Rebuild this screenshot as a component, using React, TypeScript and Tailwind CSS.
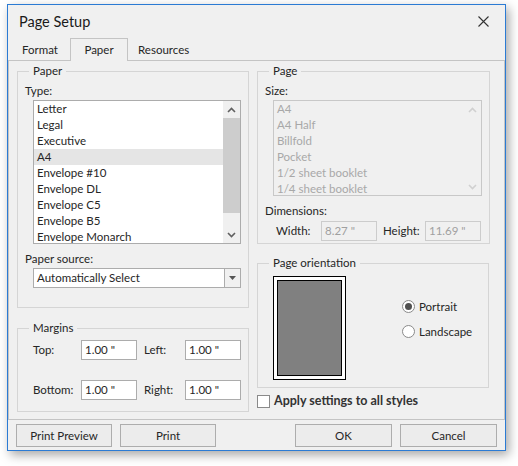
import React from 'react'

const font = { fontFamily: 'Lato, "Noto Sans", sans-serif' }

function GroupBox({ title, className, children }: { title: string; className?: string; children: React.ReactNode }) {
  return (
    <fieldset className={`border border-[#d5d5d5] px-[7px] ${className ?? ''}`}>
      <legend className="ml-[4px] px-[4px] leading-[16px]">{title}</legend>
      {children}
    </fieldset>
  )
}

function Arrow({ dir, disabled }: { dir: 'up' | 'down'; disabled?: boolean }) {
  const c = disabled ? '#d0d0d0' : '#606060'
  return (
    <svg width="9" height="6" viewBox="0 0 9 6">
      {dir === 'up' ? (
        <path d="M1 5 L4.5 1.5 L8 5" fill="none" stroke={c} strokeWidth="1.6" />
      ) : (
        <path d="M1 1 L4.5 4.5 L8 1" fill="none" stroke={c} strokeWidth="1.6" />
      )}
    </svg>
  )
}

function Field({ value, disabled, className }: { value: string; disabled?: boolean; className?: string }) {
  return (
    <div
      className={`h-[20px] w-[56px] shrink-0 border flex items-center px-[3px] ${
        disabled ? 'border-[#cccccc] text-[#a0a0a0] bg-[#f0f0f0]' : 'border-[#acacac] bg-white'
      } ${className ?? ''}`}
    >
      {value}
    </div>
  )
}

const paperTypes = ['Letter', 'Legal', 'Executive', 'A4', 'Envelope #10', 'Envelope DL', 'Envelope C5', 'Envelope B5', 'Envelope Monarch']
const pageSizes = ['A4', 'A4 Half', 'Billfold', 'Pocket', '1/2 sheet booklet', '1/4 sheet booklet']

export default function App() {
  return (
    <div className="w-[518px] h-[466px] bg-white pt-[4px] pl-[7px] text-[11.5px] text-[#262626]" style={font}>
      <div className="w-[499px] h-[447px] border border-[#2b7bd4] bg-[#f0f0f0] flex flex-col shadow-[3px_4px_10px_rgba(0,0,0,0.35)]">
        {/* title bar */}
        <div className="h-[33px] flex items-center justify-between pl-[11px] pr-[16px] shrink-0">
          <span className="text-[14.5px] text-[#1a1a1a]">Page Setup</span>
          <svg width="11" height="11" viewBox="0 0 11 11">
            <path d="M0.5 0.5 L10.5 10.5 M10.5 0.5 L0.5 10.5" stroke="#333" strokeWidth="1.1" />
          </svg>
        </div>

        {/* tabs */}
        <div className="h-[22px] flex items-end shrink-0 relative z-10">
          <div className="h-[20px] w-[62px] pl-[14px] flex items-center">Format</div>
          <div className="h-[23px] w-[58px] -mb-[1px] flex items-center justify-center border border-b-0 border-[#c4c4c4] bg-[#f0f0f0]">
            Paper
          </div>
          <div className="h-[20px] px-[10px] flex items-center">Resources</div>
        </div>

        {/* panel */}
        <div className="h-[360px] border border-[#c4c4c4] flex gap-[8px] pl-[8px] pt-[2px] shrink-0">
          {/* left column */}
          <div className="w-[232px] flex flex-col">
            <GroupBox title="Paper" className="pb-[19px]">
              <div className="mt-[4px] leading-[16px]">Type:</div>
              <div className="ml-[8px] mt-[1px] w-[208px] h-[144px] border border-[#acacac] bg-white flex overflow-hidden">
                <div className="flex-1 flex flex-col">
                  {paperTypes.map((t) => (
                    <div key={t} className={`h-[16px] shrink-0 leading-[16px] px-[3px] ${t === 'A4' ? 'bg-[#e5e5e5]' : ''}`}>
                      {t}
                    </div>
                  ))}
                </div>
                <div className="w-[17px] bg-[#f0f0f0] flex flex-col items-center">
                  <div className="h-[17px] flex items-center justify-center">
                    <Arrow dir="up" />
                  </div>
                  <div className="w-[17px] h-[95px] bg-[#cdcdcd]" />
                  <div className="flex-1" />
                  <div className="h-[17px] flex items-center justify-center">
                    <Arrow dir="down" />
                  </div>
                </div>
              </div>
              <div className="mt-[7px] leading-[16px]">Paper source:</div>
              <div className="ml-[8px] mt-[1px] w-[208px] h-[20px] border border-[#acacac] bg-white flex">
                <div className="flex-1 flex items-center px-[3px]">Automatically Select</div>
                <div className="w-[16px] border-l border-[#acacac] bg-[#f0f0f0] flex items-center justify-center">
                  <svg width="7" height="4" viewBox="0 0 7 4">
                    <path d="M0 0 H7 L3.5 4 Z" fill="#555" />
                  </svg>
                </div>
              </div>
            </GroupBox>

            <GroupBox title="Margins" className="mt-[12px] pb-[11px]">
              <div className="mt-[4px] flex flex-col gap-[20px] pl-[8px]">
                <div className="flex items-center">
                  <span className="w-[48px] shrink-0">Top:</span>
                  <Field value={'1.00 "'} />
                  <span className="w-[48px] shrink-0 pl-[7px]">Left:</span>
                  <Field value={'1.00 "'} />
                </div>
                <div className="flex items-center">
                  <span className="w-[48px] shrink-0">Bottom:</span>
                  <Field value={'1.00 "'} />
                  <span className="w-[48px] shrink-0 pl-[7px]">Right:</span>
                  <Field value={'1.00 "'} />
                </div>
              </div>
            </GroupBox>
          </div>

          {/* right column */}
          <div className="w-[232px] flex flex-col">
            <GroupBox title="Page" className="pb-[2px]">
              <div className="mt-[4px] leading-[16px]">Size:</div>
              <div className="ml-[8px] mt-[1px] w-[209px] h-[96px] border border-[#c8c8c8] flex overflow-hidden text-[#a8a8a8]">
                <div className="flex-1 flex flex-col">
                  {pageSizes.map((t) => (
                    <div key={t} className="h-[16px] shrink-0 leading-[16px] px-[3px]">
                      {t}
                    </div>
                  ))}
                </div>
                <div className="w-[17px] bg-[#f0f0f0] flex flex-col justify-between">
                  <div className="h-[17px] flex items-center justify-center">
                    <Arrow dir="up" disabled />
                  </div>
                  <div className="h-[17px] flex items-center justify-center">
                    <Arrow dir="down" disabled />
                  </div>
                </div>
              </div>
              <div className="mt-[7px] leading-[16px]">Dimensions:</div>
              <div className="mt-[2px] flex items-center pl-[11px]">
                <span className="w-[45px] shrink-0">Width:</span>
                <Field value={'8.27 "'} disabled />
                <span className="w-[48px] shrink-0 pl-[6px]">Height:</span>
                <Field value={'11.69 "'} disabled />
              </div>
            </GroupBox>

            <GroupBox title="Page orientation" className="mt-[11px] pb-[7px]">
              <div className="mt-[5px] flex items-center pl-[8px]">
                <div className="w-[73px] h-[104px] shrink-0 border border-black bg-white p-[3px]">
                  <div className="w-full h-full border border-black bg-[#808080]" />
                </div>
                <div className="ml-[56px] flex flex-col gap-[9px] -mt-[18px]">
                  <div className="flex items-center gap-[4px] leading-[16px]">
                    <div className="w-[13px] h-[13px] rounded-full border border-[#8a8a8a] bg-white flex items-center justify-center">
                      <div className="w-[7px] h-[7px] rounded-full bg-[#505050]" />
                    </div>
                    <span>Portrait</span>
                  </div>
                  <div className="flex items-center gap-[4px] leading-[16px]">
                    <div className="w-[13px] h-[13px] rounded-full border border-[#8a8a8a] bg-white" />
                    <span>Landscape</span>
                  </div>
                </div>
              </div>
            </GroupBox>

            <div className="mt-[4px] flex items-center gap-[4px]">
              <div className="w-[13px] h-[13px] border border-[#8a8a8a] bg-white" />
              <span className="font-bold text-[12.5px] text-[#333]">Apply settings to all styles</span>
            </div>
          </div>
        </div>

        {/* buttons */}
        <div className="flex items-center pt-[4px] pl-[8px] pr-[8px] gap-[8px]">
          <button className="w-[96px] h-[23px] border border-[#adadad] bg-[#ececec]">Print Preview</button>
          <button className="w-[96px] h-[23px] border border-[#adadad] bg-[#ececec]">Print</button>
          <div className="flex-1" />
          <button className="w-[97px] h-[23px] border border-[#adadad] bg-[#ececec]">OK</button>
          <button className="w-[97px] h-[23px] border border-[#adadad] bg-[#ececec]">Cancel</button>
        </div>
      </div>
    </div>
  )
}
